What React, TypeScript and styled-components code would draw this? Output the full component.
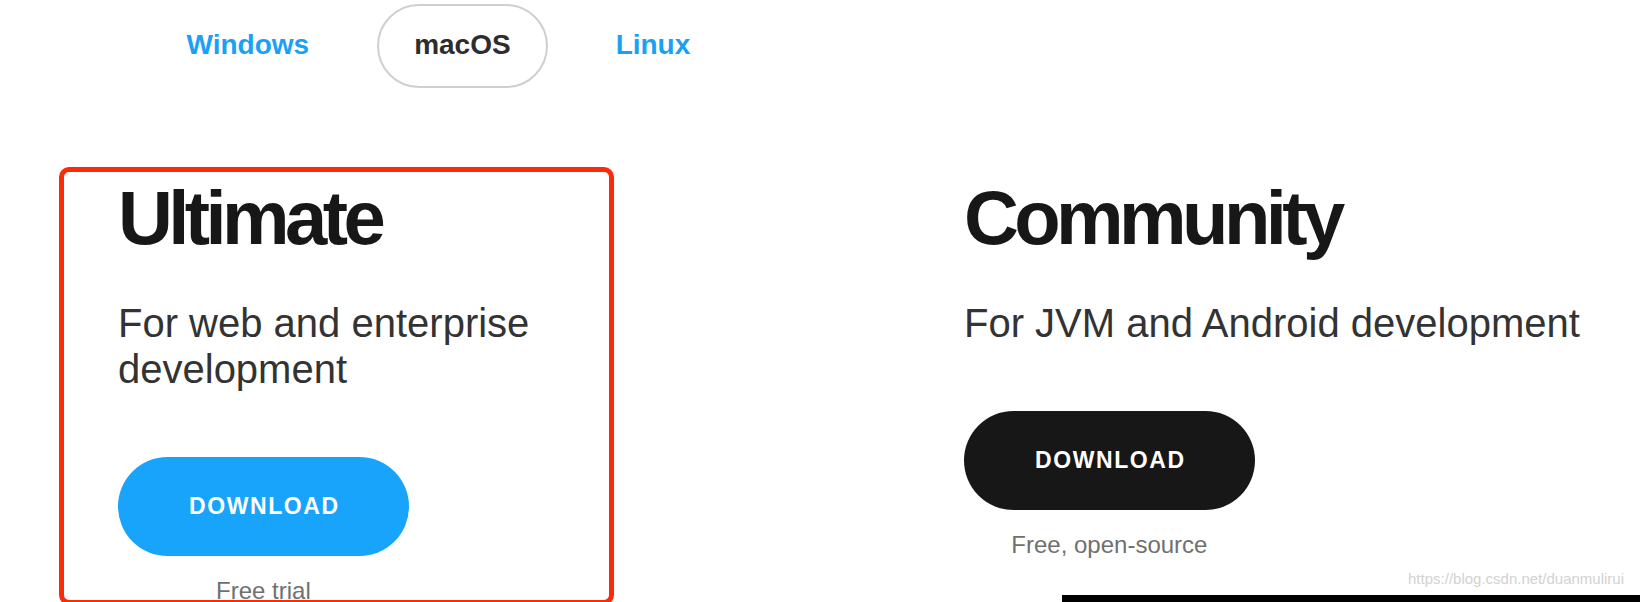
import React from 'react'
import styled, { createGlobalStyle } from 'styled-components'

type Edition = {
    name: string
    description: string
    note: string
    variant: 'blue' | 'dark'
}

const editions: Edition[] = [
    { name: 'Ultimate', description: 'For web and enterprise development', note: 'Free trial', variant: 'blue' },
    { name: 'Community', description: 'For JVM and Android development', note: 'Free, open-source', variant: 'dark' },
]

const platforms = ['Windows', 'macOS', 'Linux']

const App: React.FC = () => {
    return (
        <>
            <GlobalStyle />
            <Page>
                <Tabs>
                    {platforms.map(p => (
                        <Tab key={p} $active={p === 'macOS'}>{p}</Tab>
                    ))}
                </Tabs>
                <Columns>
                    {editions.map(ed => (
                        <Column key={ed.name}>
                            <Title>{ed.name}</Title>
                            <Description>{ed.description}</Description>
                            <DownloadBlock>
                                <DownloadButton $variant={ed.variant}>DOWNLOAD</DownloadButton>
                                <Note>{ed.note}</Note>
                            </DownloadBlock>
                            {ed.variant === 'dark' && <DarkStrip />}
                            {ed.variant === 'blue' && <Highlight />}
                        </Column>
                    ))}
                </Columns>
                <Watermark>https://blog.csdn.net/duanmulirui</Watermark>
            </Page>
        </>
    )
}

const GlobalStyle = createGlobalStyle`
    html, body {
        margin: 0;
        padding: 0;
        height: 602px;
        overflow: hidden;
        background: #fff;
    }
    body {
        font-family: "Liberation Sans", Arial, Helvetica, sans-serif;
    }
`

const Page = styled.div`
    position: relative;
    height: 602px;
    overflow: hidden;
`

const Tabs = styled.nav`
    display: flex;
    gap: 30px;
    padding-left: 149px;
    margin-top: 4px;
`

const Tab = styled.a<{ $active?: boolean }>`
    display: inline-flex;
    align-items: center;
    box-sizing: border-box;
    height: 84px;
    padding: 0 35.5px 2px;
    border: 2px solid ${p => (p.$active ? '#cfcfcf' : 'transparent')};
    border-radius: 42px;
    font-size: 28px;
    font-weight: 700;
    color: ${p => (p.$active ? '#2d2d2d' : '#1aa1f7')};
    cursor: pointer;
`

const Columns = styled.div`
    display: grid;
    grid-template-columns: 490px 1fr;
    column-gap: 356px;
    padding-left: 118px;
    margin-top: 88px;
`

const Column = styled.section`
    position: relative;
    display: flex;
    flex-direction: column;
    align-items: flex-start;
`

const Title = styled.h2`
    margin: 0;
    font-size: 76px;
    line-height: 1.1;
    font-weight: 700;
    letter-spacing: -4.6px;
    color: #171717;
`

const Description = styled.p`
    margin: 40px 0 0;
    font-size: 40px;
    line-height: 46px;
    color: #333;
`

const DownloadBlock = styled.div`
    margin-top: 65px;
    display: flex;
    flex-direction: column;
    align-items: center;
`

const DownloadButton = styled.button<{ $variant: 'blue' | 'dark' }>`
    height: 99px;
    padding: 0 69px 0 71px;
    border: none;
    border-radius: 50px;
    background: ${p => (p.$variant === 'blue' ? '#19a4fb' : '#171717')};
    color: #fff;
    font-family: inherit;
    font-size: 23px;
    font-weight: 700;
    letter-spacing: 1.6px;
    cursor: pointer;
`

const Note = styled.div`
    margin-top: 19px;
    font-size: 24px;
    line-height: 1.3;
    color: #707070;
`

const DarkStrip = styled.div`
    align-self: stretch;
    margin: 35px 0 0 98px;
    height: 40px;
    background: #000;
`

// red annotation frame drawn over the Ultimate column
const Highlight = styled.div`
    position: absolute;
    left: -59px;
    top: -9px;
    width: 555px;
    height: 438px;
    box-sizing: border-box;
    border: 5px solid #fb2a0b;
    border-radius: 10px;
    pointer-events: none;
    z-index: 1;
`

const Watermark = styled.div`
    position: absolute;
    right: 16px;
    bottom: 15px;
    font-size: 15px;
    color: #d2d2d2;
    z-index: 2;
`

export default App
